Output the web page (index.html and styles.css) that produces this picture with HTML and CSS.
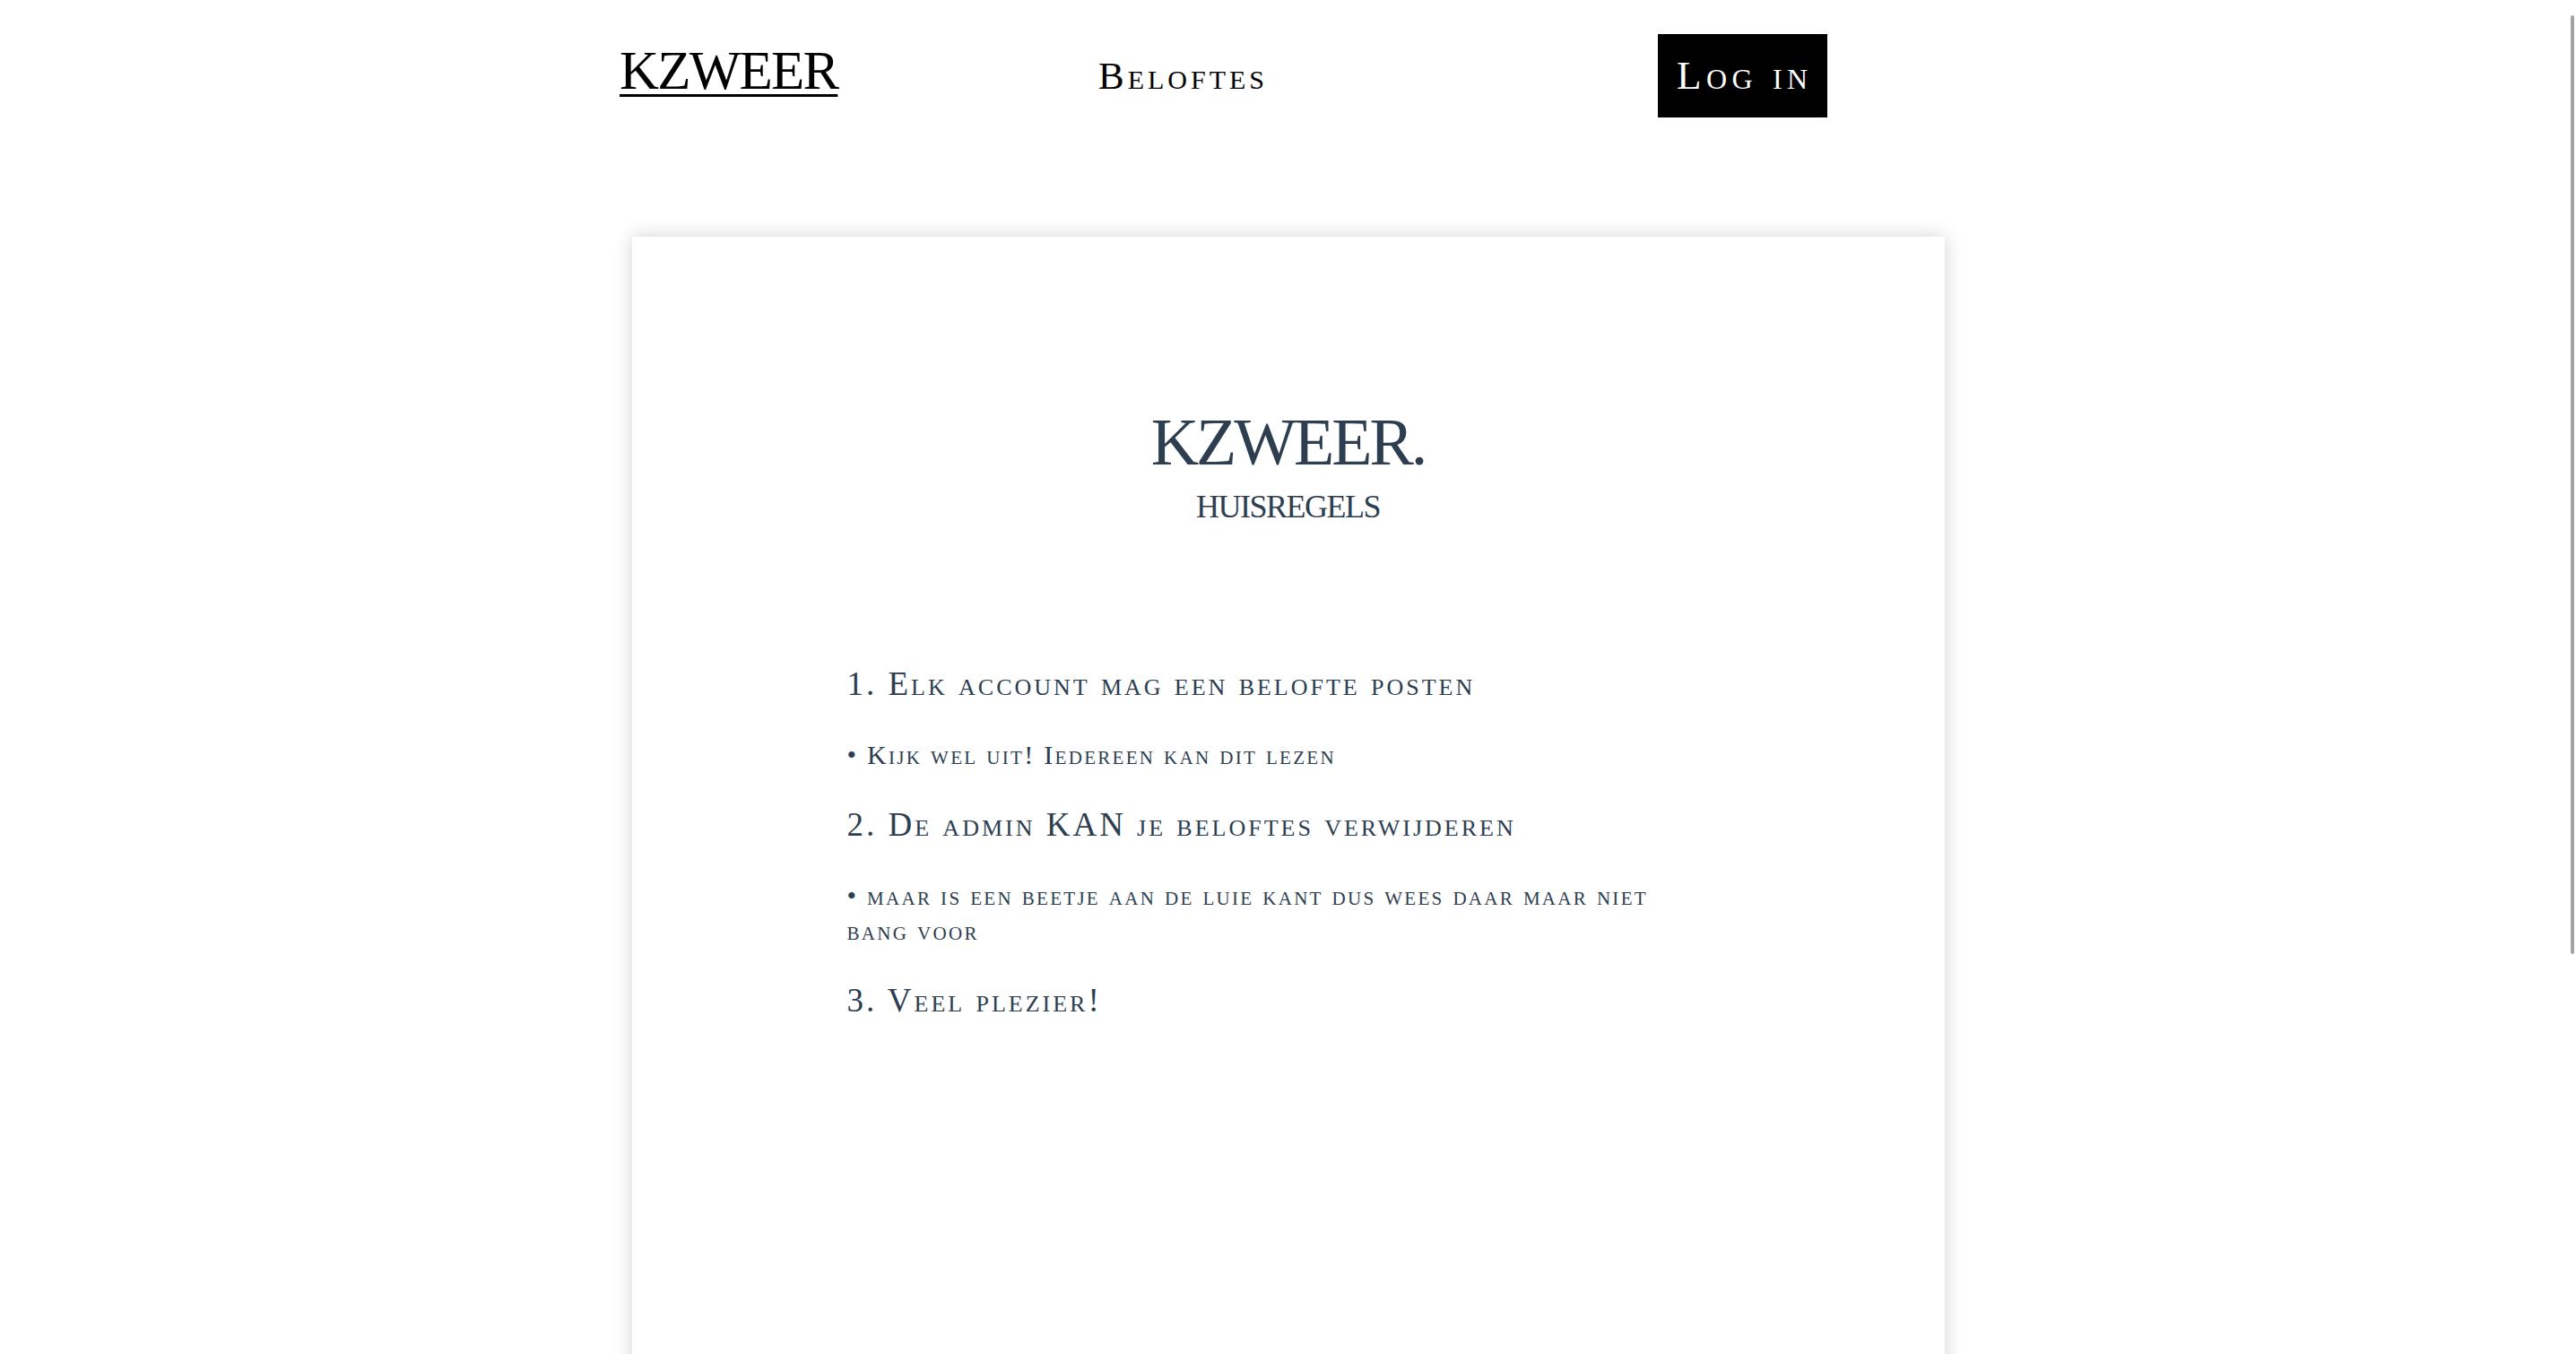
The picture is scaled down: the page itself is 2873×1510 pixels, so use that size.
FILE: index.html
```html
<!DOCTYPE html>
<html lang="nl">
<head>
<meta charset="utf-8">
<title>KZWEER</title>
<link rel="stylesheet" href="styles.css">
</head>
<body>
<header class="site-header">
  <a class="logo" href="#">KZWEER</a>
  <a class="nav-link" href="#">Beloftes</a>
  <a class="login" href="#">Log in</a>
</header>
<main class="card">
  <div class="intro">
    <h1 class="title">KZWEER.</h1>
    <p class="subtitle">HUISREGELS</p>
  </div>
  <section class="rules">
    <h2 class="rule">1. Elk account mag een belofte posten</h2>
    <p class="note">• Kijk wel uit! Iedereen kan dit lezen</p>
    <h2 class="rule">2. De admin KAN je beloftes verwijderen</h2>
    <p class="note">• maar is een beetje aan de luie kant dus wees daar maar niet bang voor</p>
    <h2 class="rule">3. Veel plezier!</h2>
  </section>
</main>
<div class="scroll-thumb"></div>
</body>
</html>
```
FILE: styles.css
```css
body {
  margin: 0;
  background: #ffffff;
  font-family: "Liberation Serif", "Times New Roman", serif;
  color: #000000;
}

.site-header {
  display: grid;
  grid-template-columns: 534px 624px auto;
  align-items: baseline;
  padding: 38px 0 0 691px;
}

.logo {
  justify-self: start;
  font-size: 61px;
  letter-spacing: -1.8px;
  color: #000000;
  text-decoration: underline;
  text-decoration-thickness: 3px;
  text-underline-offset: 6px;
}

.nav-link {
  justify-self: start;
  font-size: 43px;
  font-variant: small-caps;
  letter-spacing: 4px;
  color: #000000;
  text-decoration: none;
}

.login {
  justify-self: start;
  font-size: 45px;
  line-height: 52px;
  padding: 20px 16px 21px 21px;
  background: #000000;
  color: #ffffff;
  font-variant: small-caps;
  letter-spacing: 5.5px;
  text-decoration: none;
}

.card {
  box-sizing: border-box;
  width: 1464px;
  min-height: 1840px;
  margin: 133px auto 40px;
  padding: 189px 240px 0;
  background: #ffffff;
  box-shadow: 0 0 20px rgba(0, 0, 0, 0.18);
}

.intro {
  text-align: center;
  color: #2c3e50;
}

.title {
  margin: 0;
  font-size: 74px;
  line-height: 80px;
  font-weight: normal;
  letter-spacing: -3px;
}

.subtitle {
  margin: 12px 0 0;
  font-size: 36px;
  line-height: 40px;
  letter-spacing: -1.5px;
}

.rules {
  display: flex;
  flex-direction: column;
  gap: 37px;
  max-width: 950px;
  margin-top: 156px;
  color: #2c3e50;
}

.rule {
  margin: 0;
  font-size: 37px;
  line-height: 44px;
  font-weight: normal;
  font-variant: small-caps;
  letter-spacing: 3px;
}

.note {
  margin: 0;
  font-size: 30px;
  line-height: 39px;
  font-variant: small-caps;
  letter-spacing: 2.3px;
}

.scroll-thumb {
  position: fixed;
  top: 17px;
  right: 2px;
  width: 4px;
  height: 1047px;
  border-radius: 2px;
  background: #a3a3a3;
}
```
